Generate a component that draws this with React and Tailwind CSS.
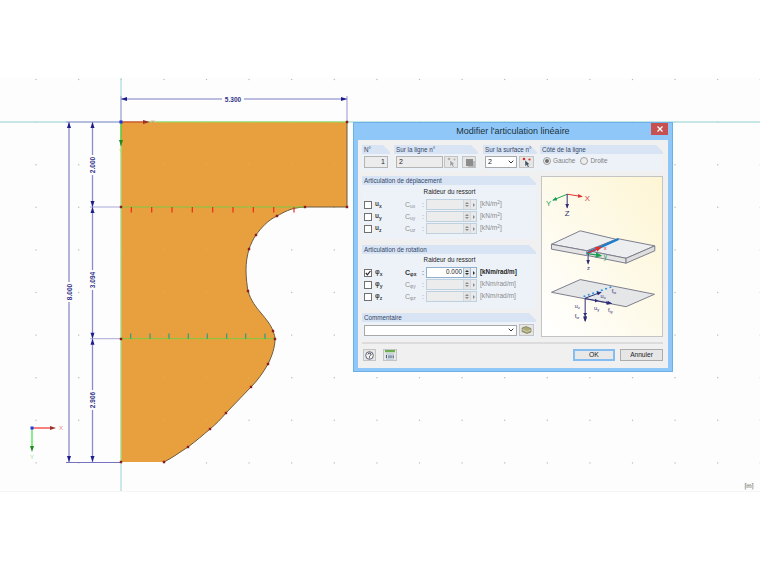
import React from "react";

const xs = Array.from({ length: 18 }, (_, i) => 36 + 42.6 * i);
const ys = Array.from({ length: 10 }, (_, i) => 79.4 + 42.6 * i);
const topTicks = [131.3, 151.7, 172, 192.3, 212.7, 233, 253.3, 273.7, 294];
const midTicks = [130.7, 150, 169, 188.3, 207.3, 226.7, 245.7, 265];
const nodes = [[121, 122], [347, 122], [121, 207], [347, 207], [305, 207], [277, 216], [256, 235], [249, 249], [248, 291], [273, 331], [275, 339], [121, 339], [268, 364], [251, 387], [226, 413], [210, 429], [188, 447], [164, 462], [121, 462]];
const outline = "M121,122 L347,122 L347,207 L305,207 C290,207.5 283,213 277,216 C268,220 261,228 256,235 C253,239 251,244 249,249 C247,256 246,263 246,270 C246,278 247,285 248,291 C251,301 256,307 261,313 C266,319 271,325 273,331 C274.5,335 275,337 275,339 C275,347 272,356 268,364 C263,373 257,381 251,387 L226,413 C221,419 216,424 210,429 C203,435 196,441 188,447 C180,452 172,458 164,462 L121,462 Z";
const curve = "M347,122 L347,207 L305,207 C290,207.5 283,213 277,216 C268,220 261,228 256,235 C253,239 251,244 249,249 C247,256 246,263 246,270 C246,278 247,285 248,291 C251,301 256,307 261,313 C266,319 271,325 273,331 C274.5,335 275,337 275,339 C275,347 272,356 268,364 C263,373 257,381 251,387 L226,413 C221,419 216,424 210,429 C203,435 196,441 188,447 C180,452 172,458 164,462";

function VDim({ x, y1, y2, label, mid }) {
  return (
    <g>
      <line x1={x} y1={y1} x2={x} y2={y2} stroke="#8a8acc" strokeWidth="1.3" />
      <path d={`M${x - 2},${y1 + 6} L${x},${y1} L${x + 2},${y1 + 6} Z`} fill="#1c1c8c" />
      <path d={`M${x - 2},${y2 - 6} L${x},${y2} L${x + 2},${y2 - 6} Z`} fill="#1c1c8c" />
      <rect x={x - 3.5} y={mid - 10} width="7" height="20" fill="#fdfdfd" />
      <text x={x} y={mid} transform={`rotate(-90 ${x} ${mid})`} textAnchor="middle" dominantBaseline="central" fontSize="6.5" fontWeight="700" fill="#343488">{label}</text>
    </g>
  );
}

function Model() {
  return (
    <svg className="absolute inset-0" width="760" height="414" viewBox="0 78 760 414">
      <defs>
        <clipPath id="shape"><path d={outline} /></clipPath>
      </defs>
      {xs.flatMap((x) => ys.map((y) => <rect key={`${x}-${y}`} x={x - 0.5} y={y - 0.5} width="1.2" height="1.2" fill="#b8b8b8" />))}
      <line x1="0" y1="122" x2="760" y2="122" stroke="#b4dede" strokeWidth="1.3" />
      <line x1="121" y1="78" x2="121" y2="492" stroke="#b4dede" strokeWidth="1.3" />
      <line x1="66" y1="122" x2="121" y2="122" stroke="#b0b0de" strokeWidth="1.3" />
      <line x1="121" y1="96" x2="121" y2="122" stroke="#b0b0de" strokeWidth="1.3" />
      <line x1="347" y1="96" x2="347" y2="122" stroke="#b0b0de" strokeWidth="1.3" />
      <line x1="90" y1="207" x2="121" y2="207" stroke="#a8a8d8" />
      <line x1="90" y1="338.7" x2="121" y2="338.7" stroke="#a8a8d8" />
      <line x1="66" y1="462.5" x2="121" y2="462.5" stroke="#7474c0" />

      <path d={outline} fill="#e8a03e" />
      <g clipPath="url(#shape)">
        {xs.flatMap((x) => ys.map((y) => <rect key={`o${x}-${y}`} x={x - 0.5} y={y - 0.5} width="1.2" height="1.2" fill="#dcae68" />))}
      </g>
      <path d={curve} fill="none" stroke="#6f5a3c" strokeWidth="1" />
      <line x1="121" y1="122" x2="347" y2="122" stroke="#8fdc50" strokeWidth="1" />
      <line x1="121" y1="122" x2="121" y2="462" stroke="#a4e480" strokeWidth="1" />
      <line x1="121" y1="207" x2="305" y2="207" stroke="#7fc840" strokeWidth="1" />
      <line x1="121" y1="338.7" x2="275" y2="338.7" stroke="#7fc840" strokeWidth="1" />
      {topTicks.map((x) => <line key={x} x1={x} y1="207" x2={x} y2="212.5" stroke="#f02818" strokeWidth="1.2" />)}
      {midTicks.map((x) => <line key={x} x1={x} y1="333.5" x2={x} y2="338.7" stroke="#2f9a80" strokeWidth="1.2" />)}
      {nodes.map(([x, y]) => <rect key={`${x}-${y}`} x={x - 1.2} y={y - 1.2} width="2.4" height="2.4" fill="#8c1c1c" />)}

      <line x1="121" y1="99" x2="347" y2="99" stroke="#7c7cc6" strokeWidth="1.2" />
      <path d="M121,99 L127,97 L127,101 Z M347,99 L341,97 L341,101 Z" fill="#1c1c8c" />
      <rect x="222" y="95" width="22" height="8" fill="#fdfdfd" />
      <text x="233" y="99" textAnchor="middle" dominantBaseline="central" fontSize="6.5" fontWeight="700" fill="#343488">5.300</text>
      <VDim x={69} y1={122} y2={462} label="8.000" mid={292} />
      <VDim x={92.5} y1={122} y2={207} label="2.000" mid={165} />
      <VDim x={92.5} y1={207} y2={338.7} label="3.094" mid={280} />
      <VDim x={92.5} y1={338.7} y2={462} label="2.906" mid={400} />

      <line x1="121" y1="122" x2="146" y2="122" stroke="#f01c1c" strokeWidth="1" />
      <path d="M150,122 L143,120 L143,124 Z" fill="#a03030" />
      <text x="151" y="122" dominantBaseline="central" fontSize="6" fill="#f08a70">X</text>
      <line x1="121" y1="122" x2="121" y2="146" stroke="#34c020" strokeWidth="1" />
      <path d="M121,146 L119,140 L123,140 Z" fill="#208a20" />
      <text x="121" y="151" textAnchor="middle" dominantBaseline="central" fontSize="6" fill="#a0e060">Y</text>
      <rect x="119.5" y="120.5" width="3" height="3" fill="#1c3ce0" />

      <line x1="32" y1="428" x2="53" y2="428" stroke="#f03030" strokeWidth="1.2" />
      <path d="M56,428 L50,426 L50,430 Z" fill="#a03030" />
      <text x="59" y="428" dominantBaseline="central" fontSize="6" fill="#f08a80">X</text>
      <line x1="32" y1="428" x2="32" y2="449" stroke="#40e040" strokeWidth="1.2" />
      <path d="M32,452 L30,446 L34,446 Z" fill="#208a20" />
      <text x="32" y="457" textAnchor="middle" dominantBaseline="central" fontSize="6" fill="#a0e0a0">Y</text>
      <rect x="30.5" y="426.5" width="3" height="3" fill="#1c3ce0" />
      <text x="749" y="486" textAnchor="middle" dominantBaseline="central" fontSize="6.5" fill="#555555" stroke="none" style={{ textRendering: "geometricPrecision" }}>[m]</text>
      <line x1="0" y1="491.5" x2="760" y2="491.5" stroke="#f5f5f5" />
    </svg>
  );
}

function Group({ title, className = "", children }) {
  return (
    <div className={`flex flex-col bg-[#edf2f9] [clip-path:polygon(0_0,calc(100%-7px)_0,100%_7px,100%_100%,0_100%)] ${className}`}>
      <div className="h-[9px] shrink-0 bg-[#d8e4f3] pl-[2px] text-[6.3px] leading-[9px] text-[#30456a] whitespace-nowrap">{title}</div>
      {children}
    </div>
  );
}

function PickIcon({ red }) {
  return (
    <svg width="11" height="11" viewBox="0 0 11 11">
      <circle cx="3" cy="2" r="1.3" fill={red ? "#d83030" : "#b0b0a8"} />
      <circle cx="8.5" cy="2.5" r="1.1" fill={red ? "#d83030" : "#b8b8b0"} />
      <path d="M4,3 L4,9.5 L5.6,8 L7,10.5 L8.2,9.8 L7,7.6 L9,7.4 Z" fill={red ? "#405060" : "#9aa0a0"} stroke="#fff" strokeWidth="0.4" />
    </svg>
  );
}

function IconButton({ children, className = "" }) {
  return <div className={`flex h-[12px] items-center justify-center border border-[#c4c4c4] bg-[#e6e6e6] ${className}`}>{children}</div>;
}

function Check({ checked }) {
  return (
    <div className="flex h-[8px] w-[8px] items-center justify-center border border-[#707070] bg-white">
      {checked && (
        <svg width="6" height="6" viewBox="0 0 6 6">
          <path d="M0.8,3 L2.4,4.8 L5.4,1" fill="none" stroke="#222" strokeWidth="1.2" />
        </svg>
      )}
    </div>
  );
}

function Spin({ on, value }) {
  return (
    <div className={`flex h-[11px] w-[51px] items-stretch border ${on ? "border-[#90b0d0] bg-white" : "border-[#bfd0de] bg-[#ececec]"}`}>
      <div className="flex flex-1 items-center justify-end pr-[1px] text-[6.4px] leading-none text-[#222]">{value}</div>
      <div className={`flex w-[7px] flex-col items-center justify-center gap-[1px] border-l ${on ? "border-[#a8bdd0] bg-[#dfe4e9]" : "border-[#cdd8e2] bg-[#e4e4e4]"}`}>
        <div className={`h-0 w-0 border-x-[2px] border-b-[2px] border-x-transparent ${on ? "border-b-[#333]" : "border-b-[#8c8c8c]"}`} />
        <div className={`h-0 w-0 border-x-[2px] border-t-[2px] border-x-transparent ${on ? "border-t-[#333]" : "border-t-[#8c8c8c]"}`} />
      </div>
      <div className={`flex w-[6px] items-center justify-center border-l ${on ? "border-[#a8bdd0] bg-[#eef0f3]" : "border-[#cdd8e2] bg-[#eaeaea]"}`}>
        <div className={`h-0 w-0 border-y-[2px] border-l-[2px] border-y-transparent ${on ? "border-l-[#333]" : "border-l-[#8c8c8c]"}`} />
      </div>
    </div>
  );
}

function SpringRow({ sym, sub, c, unit, on, checked, value, sup }) {
  return (
    <div className="grid h-[11px] grid-cols-[11px_30px_17px_4px_51px_auto] items-center pl-[2px]">
      <Check checked={checked} />
      <div className="text-[6.5px] font-bold leading-none text-[#444]">{sym}<sub className="text-[5px]">{sub}</sub></div>
      <div className={`text-[7px] leading-none ${on ? "font-bold text-[#333]" : "text-[#909090]"}`}>C<sub className="text-[5px]">{c}</sub></div>
      <div className={`text-[7px] leading-none ${on ? "text-[#222]" : "text-[#909090]"}`}>:</div>
      <Spin on={on} value={value} />
      <div className={`whitespace-nowrap pl-[3px] leading-none ${on ? "text-[6.3px] font-bold text-[#222]" : "text-[6.6px] text-[#8c8c8c]"}`}>{unit}{sup && <sup className="text-[5px]">2</sup>}{sup && "]"}</div>
    </div>
  );
}

function Illustration() {
  const navy = "#2c2c78";
  return (
    <svg width="120" height="159" viewBox="18 20 367 485">
      <defs>
        <marker id="r" markerWidth="5" markerHeight="4" refX="4" refY="2" orient="auto"><path d="M0,0 L5,2 L0,4 Z" fill="#e03030" /></marker>
        <marker id="g" markerWidth="5" markerHeight="4" refX="4" refY="2" orient="auto"><path d="M0,0 L5,2 L0,4 Z" fill="#18a050" /></marker>
        <marker id="n" markerWidth="5" markerHeight="4" refX="4" refY="2" orient="auto"><path d="M0,0 L5,2 L0,4 Z" fill={navy} /></marker>
      </defs>
      <line x1="95" y1="72" x2="140" y2="79" stroke="#e03030" strokeWidth="3" markerEnd="url(#r)" />
      <line x1="95" y1="72" x2="52" y2="90" stroke="#18a050" strokeWidth="3" markerEnd="url(#g)" />
      <line x1="95" y1="72" x2="95" y2="113" stroke={navy} strokeWidth="3" markerEnd="url(#n)" />
      <text x="157" y="86" textAnchor="middle" dominantBaseline="central" fontSize="24" fill="#e04040">X</text>
      <text x="38" y="99" textAnchor="middle" dominantBaseline="central" fontSize="24" fill="#18a050">Y</text>
      <text x="95" y="130" textAnchor="middle" dominantBaseline="central" fontSize="24" fill={navy}>Z</text>

      <g stroke="#7c7c8c" strokeWidth="3" strokeLinejoin="round" fill="#eceef0">
        <path d="M47,225 L135,184 L245,210 L155,245 Z" />
        <path d="M47,225 L155,245 L155,260 L47,240 Z" fill="#e4e4e4" />
        <path d="M160,245 L250,208 L363,230 L275,268 Z" />
        <path d="M160,245 L275,268 L275,283 L160,260 Z" fill="#e4e4e4" />
        <path d="M275,268 L363,230 L363,245 L275,283 Z" fill="#dedede" />
      </g>
      <line x1="155" y1="253" x2="252" y2="209" stroke="#1c7ccc" strokeWidth="7" />
      <line x1="158" y1="252" x2="198" y2="234" stroke="#e03030" strokeWidth="4" markerEnd="url(#r)" />
      <text x="211" y="238" textAnchor="middle" dominantBaseline="central" fontSize="18" fill="#e03030">x</text>
      <line x1="158" y1="254" x2="198" y2="260" stroke="#18a050" strokeWidth="4" markerEnd="url(#g)" />
      <text x="212" y="263" textAnchor="middle" dominantBaseline="central" fontSize="20" fill="#18a050">y</text>
      <line x1="159" y1="255" x2="159" y2="284" stroke={navy} strokeWidth="3" markerEnd="url(#n)" />
      <text x="160" y="299" textAnchor="middle" dominantBaseline="central" fontSize="18" fill={navy}>z</text>

      <path d="M47,372 L135,333 L362,378 L275,416 Z" fill="#e4e6e8" stroke="#7c7c8c" strokeWidth="3" />
      <line x1="145" y1="385" x2="232" y2="355" stroke="#2a90e0" strokeWidth="5" strokeDasharray="6 8" />
      <line x1="150" y1="390" x2="150" y2="460" stroke={navy} strokeWidth="3" markerEnd="url(#n)" />
      <path d="M144,445 L150,455 L156,445 Z M144,435 L150,445 L156,435 Z" fill={navy} />
      <line x1="150" y1="391" x2="230" y2="406" stroke={navy} strokeWidth="3" markerEnd="url(#n)" />
      <path d="M215,398 L225,405 L215,410 Z M180,392 L190,398 L180,403 Z" fill={navy} />
      <line x1="150" y1="390" x2="198" y2="372" stroke={navy} strokeWidth="3" markerEnd="url(#n)" />
      <g fontSize="17" fill={navy} textAnchor="middle" dominantBaseline="central">
        <text x="126" y="415">u<tspan fontSize="12" dy="3">z</tspan></text>
        <text x="125" y="446">f<tspan fontSize="12" dy="3">tz</tspan></text>
        <text x="185" y="419">u<tspan fontSize="12" dy="3">y</tspan></text>
        <text x="227" y="425">f<tspan fontSize="12" dy="3">ty</tspan></text>
        <text x="205" y="383">u<tspan fontSize="12" dy="3">x</tspan></text>
        <text x="238" y="369">f<tspan fontSize="12" dy="3">tx</tspan></text>
      </g>
    </svg>
  );
}

function Dialog() {
  return (
    <div className="absolute left-[353px] top-[44px] flex h-[250px] w-[320px] flex-col border border-[#6cb0e8] bg-[#8fc8f8] px-[4px] pb-[3px]">
      <div className="relative flex h-[17px] shrink-0 items-center justify-center text-[9px] text-[#20303c]">
        Modifier l'articulation linéaire
        <div className="absolute right-0 top-0 flex h-[12px] w-[17px] items-center justify-center bg-[#c75050]">
          <svg width="6" height="6" viewBox="0 0 6 6"><path d="M0.5,0.5 L5.5,5.5 M5.5,0.5 L0.5,5.5" stroke="#fff" strokeWidth="1.3" /></svg>
        </div>
      </div>
      <div className="flex flex-1 flex-col bg-[#f0f0f0] pl-[4px] pr-[5px] pt-[5px]">
        <div className="flex h-[26px] shrink-0">
          <Group title="N°" className="w-[28px]">
            <div className="mx-[2px] mt-[2px] flex h-[12px] items-center justify-end border border-[#b4b4b4] bg-[#ececec] pr-[2px] text-[7px] text-[#222]">1</div>
          </Group>
          <Group title="Sur la ligne n°" className="ml-[4px] w-[84px]">
            <div className="mt-[2px] flex items-center pl-[2px]">
              <div className="flex h-[12px] w-[47px] items-center border border-[#b4b4b4] bg-[#ececec] pl-[2px] text-[7px] text-[#222]">2</div>
              <IconButton className="ml-[1px] w-[14px]"><PickIcon /></IconButton>
              <IconButton className="ml-[4px] w-[14px]">
                <div className="h-[7px] w-[7px] bg-[#8c8c8c] shadow-[2px_2px_0_#bcbcbc]" />
              </IconButton>
            </div>
          </Group>
          <Group title="Sur la surface n°" className="ml-[5px] w-[54px]">
            <div className="mt-[2px] flex items-center pl-[2px]">
              <div className="flex h-[12px] w-[32px] items-center justify-between border border-[#a8a8a8] bg-white px-[2px] text-[7px] text-[#222]">
                2
                <svg width="6" height="4" viewBox="0 0 6 4"><path d="M0.7,0.7 L3,3 L5.3,0.7" fill="none" stroke="#333" strokeWidth="1" /></svg>
              </div>
              <IconButton className="ml-[2px] w-[15px] border-[#9a9a9a]"><PickIcon red /></IconButton>
            </div>
          </Group>
          <Group title="Côté de la ligne" className="ml-[3px] w-[123px]">
            <div className="mt-[3px] flex items-center pl-[3px] text-[6.4px] leading-none text-[#808080]">
              <div className="flex h-[8px] w-[8px] items-center justify-center rounded-full border border-[#a0a0a0] bg-[#eee]">
                <div className="h-[4px] w-[4px] rounded-full bg-[#707070]" />
              </div>
              <span className="ml-[2px]">Gauche</span>
              <div className="ml-[5px] h-[8px] w-[8px] rounded-full border border-[#a0a0a0] bg-[#eee]" />
              <span className="ml-[2px]">Droite</span>
            </div>
          </Group>
        </div>

        <div className="mt-[5px] flex h-[162px] shrink-0">
          <div className="flex w-[174px] flex-col">
            <Group title="Articulation de déplacement" className="h-[63px]">
              <div className="flex h-[14px] items-center justify-center pl-[1px] text-[6.3px] leading-none text-[#222]">Raideur du ressort</div>
              <div className="flex flex-col gap-[1px]">
                <SpringRow sym="u" sub="x" c="ux" unit="[kN/m" sup />
                <SpringRow sym="u" sub="y" c="uy" unit="[kN/m" sup />
                <SpringRow sym="u" sub="z" c="uz" unit="[kN/m" sup />
              </div>
            </Group>
            <Group title="Articulation de rotation" className="mt-[6px] h-[64px]">
              <div className="flex h-[13px] items-center justify-center pl-[1px] text-[6.3px] leading-none text-[#222]">Raideur du ressort</div>
              <div className="flex flex-col gap-[1px]">
                <SpringRow sym="φ" sub="x" c="φx" unit="[kNm/rad/m]" on checked value="0.000" />
                <SpringRow sym="φ" sub="y" c="φy" unit="[kNm/rad/m]" />
                <SpringRow sym="φ" sub="z" c="φz" unit="[kNm/rad/m]" />
              </div>
            </Group>
            <Group title="Commentaire" className="mt-[4px] h-[25px]">
              <div className="mt-[2px] flex items-center pl-[2px]">
                <div className="flex h-[11px] w-[153px] items-center justify-end border border-[#a8a8a8] bg-white pr-[2px]">
                  <svg width="6" height="4" viewBox="0 0 6 4"><path d="M0.7,0.7 L3,3 L5.3,0.7" fill="none" stroke="#333" strokeWidth="1" /></svg>
                </div>
                <IconButton className="ml-[2px] w-[15px] border-[#a8a8a8]">
                  <svg width="11" height="8" viewBox="0 0 11 8">
                    <path d="M1,2 L5,0.5 L10,2.5 L10,6 L6,7.5 L1,5.5 Z" fill="#a8a878" stroke="#6c6c48" strokeWidth="0.6" />
                    <path d="M1,3.5 L6,5.5 L10,4" fill="none" stroke="#e0dcb0" strokeWidth="0.7" />
                  </svg>
                </IconButton>
              </div>
            </Group>
          </div>
          <div className="ml-[5px] h-[161px] w-[122px] border border-[#c4c4c4] bg-linear-to-bl from-[#fdf5d4] to-white">
            <Illustration />
          </div>
        </div>

        <div className="mt-[4px] h-[2px] shrink-0 bg-[#dcdcdc]" />
        <div className="mt-[5px] flex h-[12px] shrink-0 items-center">
          <IconButton className="ml-[1px] w-[13px] border-[#b0b0b0]">
            <svg width="9" height="9" viewBox="0 0 9 9">
              <circle cx="4.5" cy="4.5" r="3.8" fill="#f4f4f0" stroke="#505870" strokeWidth="0.9" />
              <path d="M3,3.4 C3,1.8 6,1.8 6,3.4 C6,4.5 4.5,4.4 4.5,5.6" fill="none" stroke="#303850" strokeWidth="1" />
              <rect x="4" y="6.3" width="1" height="1" fill="#303850" />
            </svg>
          </IconButton>
          <IconButton className="ml-[7px] w-[14px] border-[#b0b0b0]">
            <svg width="12" height="10" viewBox="0 0 12 10">
              <rect x="1" y="0" width="10" height="2.5" fill="#6cae50" />
              <rect x="1" y="2.5" width="10" height="7.5" fill="#e4eaee" />
              <path d="M2,4 L10,4 M2,9 L10,9" stroke="#8aa0b0" strokeWidth="0.6" />
              <path d="M2.5,5 L2.5,8 M5,5.2 L5,8 M7,5.2 L7,8 M9.2,5.2 L9.2,8" stroke="#4a6078" strokeWidth="1.1" />
            </svg>
          </IconButton>
          <div className="ml-auto flex h-[12px] w-[42px] items-center justify-center border-2 border-[#86bdf0] bg-[#e8e8e8] text-[6.8px] text-[#222]">OK</div>
          <div className="ml-[5px] flex h-[12px] w-[43px] items-center justify-center border border-[#acacac] bg-[#e6e6e6] text-[6.6px] text-[#222]">Annuler</div>
        </div>
      </div>
    </div>
  );
}

export default function App() {
  return (
    <div className="flex h-[570px] w-[760px] flex-col overflow-hidden bg-white font-['Liberation_Sans',sans-serif]">
      <div className="h-[78px] shrink-0" />
      <div className="relative h-[414px] shrink-0 bg-[#fdfdfd]">
        <Model />
        <Dialog />
      </div>
    </div>
  );
}
